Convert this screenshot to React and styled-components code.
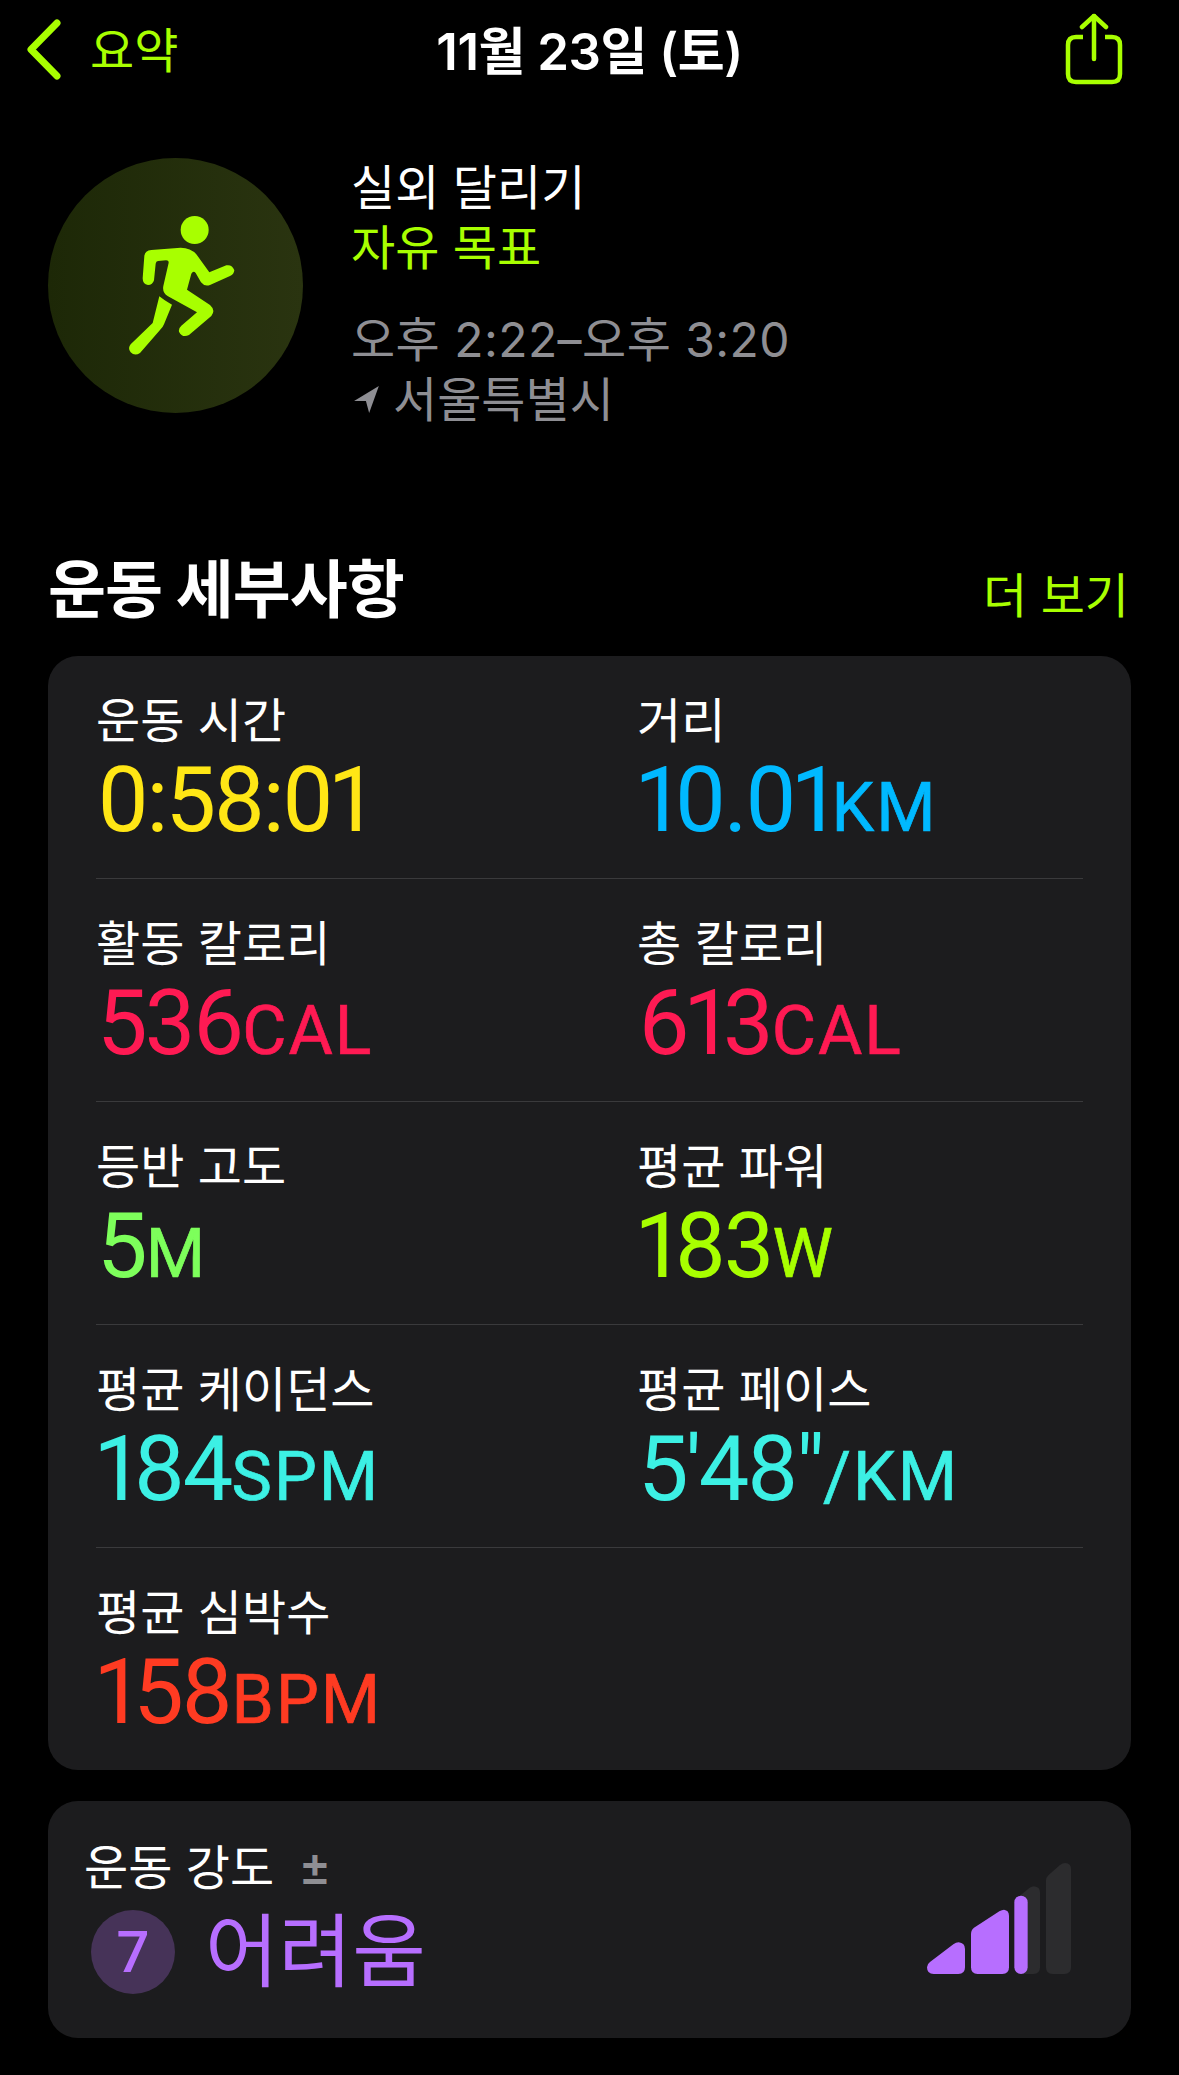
import styled, { createGlobalStyle } from "styled-components";

const lime = "#a8ff00";
const sans = `Inter, "Noto Sans CJK KR", sans-serif`;

const GlobalStyle = createGlobalStyle`
  html, body {
    margin: 0;
    padding: 0;
    background: #000;
  }
  body {
    font-family: ${sans};
    color: #fff;
  }
`;

const Page = styled.div`
  width: 1179px;
  height: 2075px;
  overflow: hidden;
  background: #000;
  padding: 0 48px;
  box-sizing: border-box;
`;

const NavBar = styled.header`
  display: grid;
  grid-template-columns: 1fr auto 1fr;
  align-items: center;
  height: 100px;
  margin: 0 -48px;
`;

const BackLink = styled.div`
  display: flex;
  align-items: center;
  gap: 29px;
  padding-left: 25px;
  color: ${lime};
  font-size: 48px;
`;

const BackText = styled.span`
  margin-bottom: 6px;
`;

const NavTitle = styled.div`
  font-size: 51px;
  font-weight: 600;
  letter-spacing: -0.5px;
  margin-bottom: 5px;
`;

const NavActions = styled.div`
  display: flex;
  justify-content: flex-end;
  padding-right: 56px;
  margin-bottom: 3px;
`;

const Summary = styled.section`
  display: flex;
  gap: 48px;
  margin-top: 58px;
`;

const Badge = styled.div`
  width: 255px;
  height: 255px;
  border-radius: 50%;
  background: linear-gradient(90deg, #1d2807, #2a3410);
  display: flex;
  align-items: center;
  justify-content: center;
`;

const SummaryText = styled.div`
  display: flex;
  flex-direction: column;
  font-size: 48px;
  line-height: 60px;
`;

const Line = styled.div`
  display: flex;
  align-items: center;
  gap: 13px;
  color: ${(p) => p.$color || "#fff"};
  margin-top: ${(p) => p.$gap || 0}px;
  letter-spacing: ${(p) => p.$spacing || 0}px;
`;

const SectionHead = styled.div`
  display: flex;
  justify-content: space-between;
  align-items: center;
  margin-top: 122px;
  height: 70px;
  margin-bottom: 34px;
`;

const SectionTitle = styled.h2`
  margin: 4px 0 0;
  font-size: 63px;
  font-weight: 700;
  line-height: 70px;
  letter-spacing: -1px;
`;

const MoreLink = styled.div`
  color: ${lime};
  font-size: 48px;
  margin-top: 9px;
  padding-right: 2px;
`;

const Card = styled.div`
  background: #1c1c1e;
  border-radius: 30px;
`;

const MetricsCard = styled(Card)`
  padding: 0 48px;
  height: 1114px;
`;

const MetricRow = styled.div`
  display: grid;
  grid-template-columns: 541px 1fr;
  height: ${(p) => (p.$last ? 222 : 223)}px;
  box-sizing: border-box;
  border-bottom: ${(p) => (p.$last ? "none" : "1px solid #3a3a3c")};
`;

const Metric = styled.div`
  display: flex;
  flex-direction: column;
  padding-top: 37px;
`;

const MetricLabel = styled.div`
  font-size: 48px;
  line-height: 56px;
`;

const MetricValue = styled.div`
  color: ${(p) => p.$color};
  font-family: Roboto, sans-serif;
  font-size: 90px;
  line-height: 88px;
  margin-top: 8px;
  margin-left: 1px;
  letter-spacing: -2.8px;
  white-space: nowrap;
  font-variant-numeric: proportional-nums;
  font-weight: 400;
`;

const Unit = styled.span`
  font-size: 68px;
  font-weight: 400;
  letter-spacing: 2px;
  margin-left: 1px;
  -webkit-text-stroke: 0.7px currentColor;
`;

const EffortCard = styled(Card)`
  margin-top: 31px;
  height: 237px;
  padding: 38px 60px 0 36px;
  box-sizing: border-box;
  display: flex;
  justify-content: space-between;
`;

const EffortLabel = styled.div`
  display: flex;
  align-items: center;
  gap: 28px;
  font-size: 48px;
  line-height: 58px;
`;

const Plus = styled.span`
  color: #8e8e93;
  font-family: "Liberation Sans", sans-serif;
  font-size: 46px;
  font-weight: 700;
`;

const EffortValue = styled.div`
  display: flex;
  align-items: center;
  gap: 30px;
  margin-top: 12px;
  margin-left: 7px;
  color: #b76eff;
`;

const Level = styled.div`
  width: 84px;
  height: 84px;
  border-radius: 50%;
  background: #463358;
  display: flex;
  align-items: center;
  justify-content: center;
  font-family: Roboto, sans-serif;
  font-size: 58px;
  font-weight: 500;
`;

const EffortWord = styled.div`
  font-size: 80px;
  line-height: 84px;
  margin-bottom: 2px;
`;

const BarsWrap = styled.div`
  margin-top: 24px;
`;

const rows = [
  [
    { label: "운동 시간", value: "0:58:01", color: "#ffe615" },
    { label: "거리", value: "10.01", unit: "KM", color: "#00b9ff" },
  ],
  [
    { label: "활동 칼로리", value: "536", unit: "CAL", color: "#ff1a53" },
    { label: "총 칼로리", value: "613", unit: "CAL", color: "#ff1a53" },
  ],
  [
    { label: "등반 고도", value: "5", unit: "M", color: "#7dff5b" },
    { label: "평균 파워", value: "183", unit: "W", color: lime },
  ],
  [
    { label: "평균 케이던스", value: "184", unit: "SPM", color: "#3cf0e4" },
    { label: "평균 페이스", value: "5'48\"", unit: "/KM", color: "#3cf0e4" },
  ],
  [{ label: "평균 심박수", value: "158", unit: "BPM", color: "#ff3b22" }],
];

function BackIcon() {
  return (
    <svg width="36" height="62" viewBox="0 0 36 62" fill="none">
      <path
        d="M32 4L6 30.5L32 57"
        stroke={lime}
        strokeWidth="7"
        strokeLinecap="round"
        strokeLinejoin="round"
      />
    </svg>
  );
}

function ShareIcon() {
  return (
    <svg width="58" height="72" viewBox="0 0 58 72" fill="none" stroke={lime} strokeWidth="4.5" strokeLinecap="round" strokeLinejoin="round">
      <path d="M18 24H11C5.5 24 3 26.5 3 32V61C3 66.5 5.5 69 11 69H47C52.5 69 55 66.5 55 61V32C55 26.5 52.5 24 47 24H40" strokeLinecap="butt" />
      <path d="M29 46V3" />
      <path d="M17 14L29 3L41 14" />
    </svg>
  );
}

function RunnerIcon() {
  return (
    <svg width="200" height="200" viewBox="-14 15 600 600" fill={lime}>
      <circle cx="342" cy="147" r="42" />
      <path d="M186 292L191 225Q193 208 212 207L300 200Q330 200 347 220L386 274L437 253Q455 250 461 268Q460 280 448 285L388 312Q372 318 361 304L345 276Q338 268 332 278L319 326L388 372Q406 388 392 405L325 462Q305 472 295 452Q293 442 302 434L349 394L262 346Q244 335 248 315L264 245Q264 238 256 238L232 240Q226 240 225 248L220 298Q216 312 202 312Q186 310 186 292Z" />
      <path d="M236 346Q250 358 274 371L250 430Q246 440 238 447L178 516Q162 526 150 514Q140 502 150 490L216 426Z" />
    </svg>
  );
}

function LocationArrow() {
  return (
    <svg width="26" height="28" viewBox="0 0 24 26" fill="#8e8e93" style={{ marginLeft: 3 }}>
      <path d="M23 0L14 25L11 14L0 14Z" />
    </svg>
  );
}

function BarsIcon() {
  return (
    <svg width="144" height="111" viewBox="81 72 432 333">
      <path fill="#2c2c2e" d="M360 170L388 147Q395 142 402 142Q420 144 420 160V385Q420 405 400 405H370Z" />
      <path fill="#2c2c2e" d="M438 125Q438 115 446 108L480 78Q488 72 496 72Q513 74 513 90V385Q513 405 493 405H458Q438 405 438 385Z" />
      <path fill="#b76eff" d="M81 385Q81 375 90 369L160 316Q168 310 176 310Q195 312 195 330V385Q195 405 175 405H101Q81 405 81 385Z" />
      <path fill="#b76eff" d="M213 285Q213 273 222 266L298 217Q306 212 312 212Q327 214 327 230V385Q327 405 307 405H233Q213 405 213 385Z" />
      <path fill="#b76eff" d="M343 190A20 20 0 0 1 383 190V385A20 20 0 0 1 343 385Z" />
    </svg>
  );
}

export default function App() {
  return (
    <Page>
      <GlobalStyle />
      <NavBar>
        <BackLink>
          <BackIcon />
          <BackText>요약</BackText>
        </BackLink>
        <NavTitle>11월 23일 (토)</NavTitle>
        <NavActions>
          <ShareIcon />
        </NavActions>
      </NavBar>

      <Summary>
        <Badge>
          <RunnerIcon />
        </Badge>
        <SummaryText>
          <Line>실외 달리기</Line>
          <Line $color={lime}>자유 목표</Line>
          <Line $color="#8e8e93" $gap={32} $spacing={0.45}>오후 2:22–오후 3:20</Line>
          <Line $color="#8e8e93">
            <LocationArrow />
            서울특별시
          </Line>
        </SummaryText>
      </Summary>

      <SectionHead>
        <SectionTitle>운동 세부사항</SectionTitle>
        <MoreLink>더 보기</MoreLink>
      </SectionHead>

      <MetricsCard>
        {rows.map((row, i) => (
          <MetricRow key={i} $last={i === rows.length - 1}>
            {row.map((m) => (
              <Metric key={m.label}>
                <MetricLabel>{m.label}</MetricLabel>
                <MetricValue $color={m.color}>
                  {m.value}
                  {m.unit && <Unit>{m.unit}</Unit>}
                </MetricValue>
              </Metric>
            ))}
          </MetricRow>
        ))}
      </MetricsCard>

      <EffortCard>
        <div>
          <EffortLabel>
            운동 강도
            <Plus>±</Plus>
          </EffortLabel>
          <EffortValue>
            <Level>7</Level>
            <EffortWord>어려움</EffortWord>
          </EffortValue>
        </div>
        <BarsWrap>
          <BarsIcon />
        </BarsWrap>
      </EffortCard>
    </Page>
  );
}
